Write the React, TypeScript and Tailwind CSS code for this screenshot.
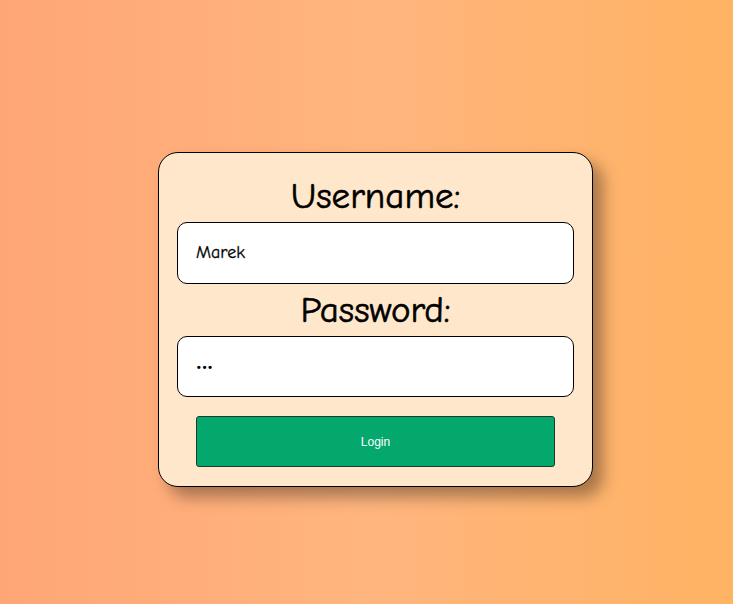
import React, { useState } from "react";

export default function App() {
  const [username, setUsername] = useState("Marek");
  const [password, setPassword] = useState("abc");

  return (
    <div className="min-h-screen w-full bg-gradient-to-r from-[#ffa676] via-[#ffb57e] to-[#ffb363] pt-[152px] pl-[158px] font-['Comic_Sans_MS','Comic_Neue','DejaVu_Sans',sans-serif]">
      <div className="w-[435px] h-[335px] bg-[#ffe7cb] border border-black rounded-[20px] px-[18px] pt-[17px] pb-[19px] flex flex-col shadow-[10px_10px_16px_rgba(0,0,0,0.35)]">
        <label className="h-[52px] leading-[52px] text-center text-[37px] text-black [-webkit-text-stroke:0.6px_black]">
          Username:
        </label>
        <input
          type="text"
          value={username}
          onChange={(e) => setUsername(e.target.value)}
          className="h-[63px] w-full bg-white border border-black rounded-[10px] px-[18px] text-[18px] text-black outline-none [-webkit-text-stroke:0.3px_black]"
        />
        <label className="h-[52px] leading-[52px] text-center text-[37px] text-black [-webkit-text-stroke:0.6px_black]">
          Password:
        </label>
        <input
          type="password"
          value={password}
          onChange={(e) => setPassword(e.target.value)}
          className="h-[63px] w-full bg-white border border-black rounded-[10px] px-[18px] text-[18px] text-black outline-none"
        />
        <button className="mt-[19px] mx-[19px] h-[52px] bg-[#04a86c] border border-[#1d3a2c] rounded-[3px] text-white text-[12px] font-['Liberation_Sans',Arial,sans-serif] hover:cursor-pointer">
          Login
        </button>
      </div>
    </div>
  );
}
